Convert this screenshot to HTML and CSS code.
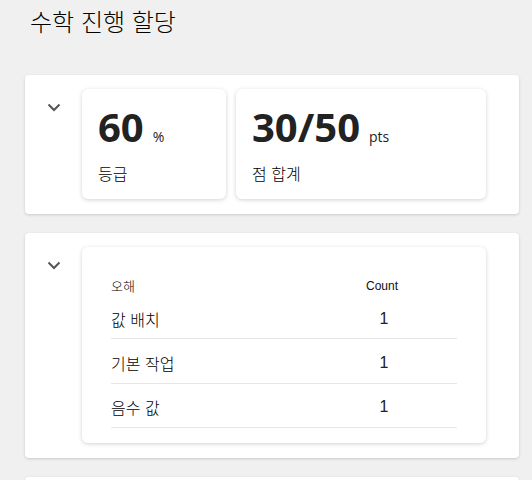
FILE: index.html
```html
<!DOCTYPE html>
<html lang="ko">
<head>
<meta charset="utf-8">
<link rel="stylesheet" href="styles.css">
</head>
<body>
<div class="page">
  <h1 class="title">수학 진행 할당</h1>

  <section class="card">
    <div class="toggle">
      <svg width="14" height="9" viewBox="0 0 14 9"><path d="M1.5 1.5 L7 7 L12.5 1.5" fill="none" stroke="#555" stroke-width="2"/></svg>
    </div>
    <div class="stats">
      <div class="stat stat-grade">
        <div class="value"><span class="num">60</span><span class="unit">%</span></div>
        <div class="label">등급</div>
      </div>
      <div class="stat stat-points">
        <div class="value"><span class="num">30/50</span><span class="unit">pts</span></div>
        <div class="label">점 합계</div>
      </div>
    </div>
  </section>

  <section class="card">
    <div class="toggle">
      <svg width="14" height="9" viewBox="0 0 14 9"><path d="M1.5 1.5 L7 7 L12.5 1.5" fill="none" stroke="#555" stroke-width="2"/></svg>
    </div>
    <div class="panel">
      <table class="table">
        <thead>
          <tr><th class="col-name">오해</th><th class="col-count">Count</th></tr>
        </thead>
        <tbody>
          <tr><td class="col-name">값 배치</td><td class="col-count">1</td></tr>
          <tr><td class="col-name">기본 작업</td><td class="col-count">1</td></tr>
          <tr class="last"><td class="col-name">음수 값</td><td class="col-count">1</td></tr>
        </tbody>
      </table>
    </div>
  </section>

  <section class="card card-empty"></section>
</div>
</body>
</html>
```

FILE: styles.css
```css
* { box-sizing: border-box; }
html, body {
  margin: 0;
  padding: 0;
  background: #f0f0f0;
  height: 100%;
  overflow: hidden;
}
body {
  font-family: "Noto Sans CJK KR", "Noto Sans", sans-serif;
  font-weight: 300;
  color: #000;
}
.page {
  padding: 0 13px 0 25px;
}
.title {
  margin: 0;
  padding: 4px 0 0 5px;
  height: 75px;
  font-size: 24px;
  font-weight: 300;
  line-height: 34px;
}
.card {
  display: flex;
  background: #fff;
  border-radius: 4px;
  box-shadow: 0 1px 3px rgba(0,0,0,0.16);
  padding: 14px 33px 15px 0;
  margin-bottom: 19px;
}
.toggle {
  width: 57px;
  flex: none;
  padding: 14px 0 0 22px;
}
.toggle svg { display: block; }
.stats {
  display: flex;
  gap: 10px;
}
.stat {
  background: #fff;
  border-radius: 6px;
  box-shadow: 0 1px 4px rgba(0,0,0,0.18);
  padding: 14px 16px 14px 16px;
}
.stat-grade { width: 144px; }
.stat-points { width: 250px; }
.value {
  display: flex;
  align-items: baseline;
  height: 48px;
  line-height: 48px;
  color: #222;
}
.num {
  font-family: "Open Sans", sans-serif;
  font-weight: 700;
  font-size: 40px;
}
.unit {
  font-family: "Open Sans", sans-serif;
  font-weight: 400;
  font-size: 14px;
  margin-left: 9px;
}
.label {
  margin-top: 10px;
  font-size: 16px;
  line-height: 24px;
}
.panel {
  flex: 1;
  background: #fff;
  border-radius: 6px;
  box-shadow: 0 1px 4px rgba(0,0,0,0.18);
  padding: 29px 29px 15px 29px;
}
.table {
  width: 100%;
  border-collapse: collapse;
}
.table th {
  font-weight: 300;
  height: 20px;
  line-height: 20px;
  padding: 0;
  font-size: 13px;
  text-align: left;
}
.table th.col-count {
  font-family: "Liberation Sans", sans-serif;
  font-weight: 400;
  font-size: 12px;
  text-align: center;
  color: #111;
}
.table td {
  height: 45px;
  padding: 4px 0 0 0;
  font-size: 16px;
  border-bottom: 1px solid #e6e6e6;
}
.table td.col-count {
  font-family: "Liberation Sans", sans-serif;
  font-weight: 400;
  text-align: center;
  padding-left: 4px;
  color: #222;
}
.col-count { width: 150px; }
.table tbody tr:first-child td { height: 42px; }
.table tbody tr.last td { height: 44px; }
.card-empty {
  height: 60px;
}
```
